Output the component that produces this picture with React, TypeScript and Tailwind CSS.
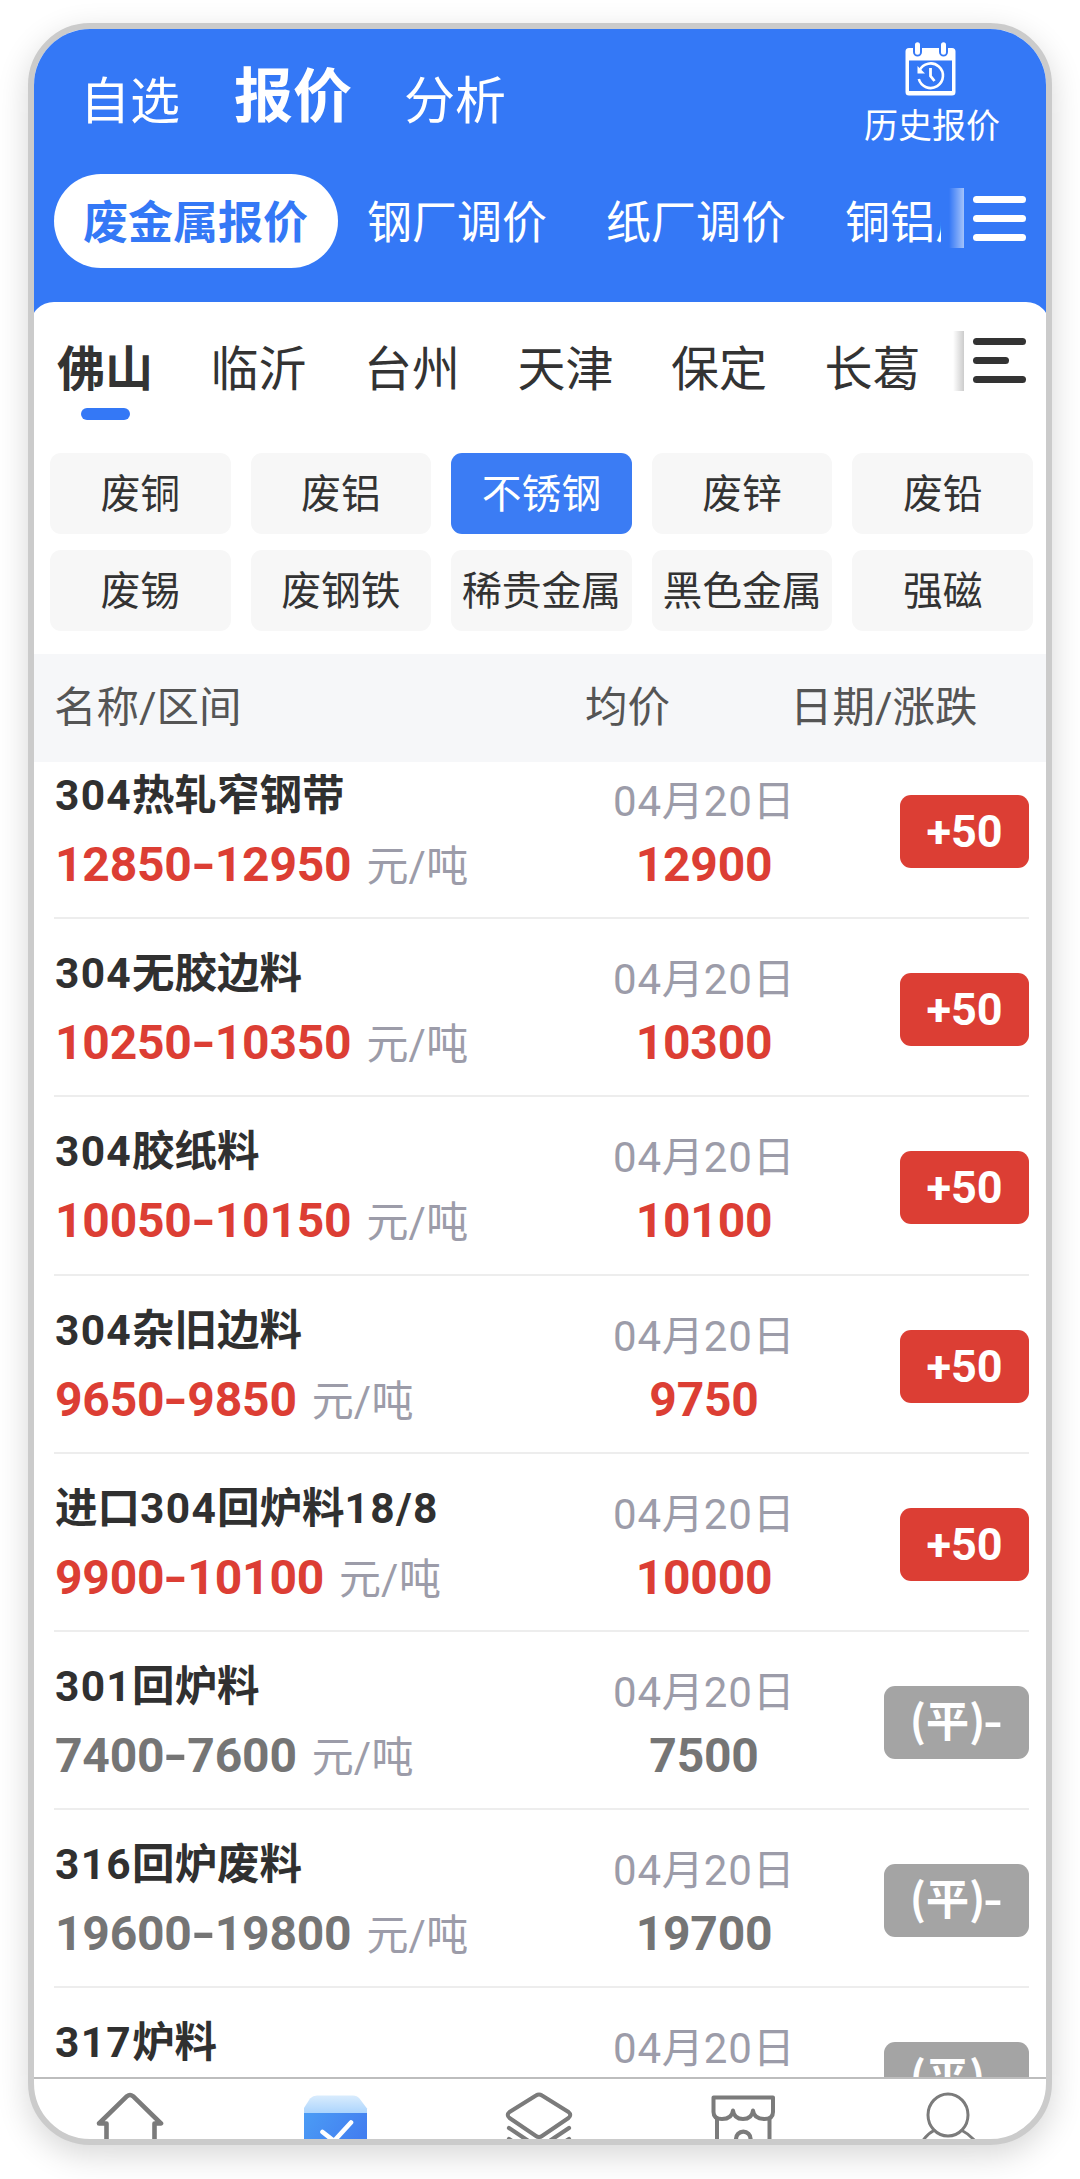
import clsx from "clsx"
import type { ReactNode } from "react"

const markets = ["钢厂调价", "纸厂调价", "铜铝厂调价"]
const cities = ["佛山", "临沂", "台州", "天津", "保定", "长葛"]
const metals = [
  "废铜",
  "废铝",
  "不锈钢",
  "废锌",
  "废铅",
  "废锡",
  "废钢铁",
  "稀贵金属",
  "黑色金属",
  "强磁",
]

type Quote = {
  name: string
  low: string
  high: string
  avg: string
  change: number
}

const quotes: Quote[] = [
  { name: "304热轧窄钢带", low: "12850", high: "12950", avg: "12900", change: 50 },
  { name: "304无胶边料", low: "10250", high: "10350", avg: "10300", change: 50 },
  { name: "304胶纸料", low: "10050", high: "10150", avg: "10100", change: 50 },
  { name: "304杂旧边料", low: "9650", high: "9850", avg: "9750", change: 50 },
  { name: "进口304回炉料18/8", low: "9900", high: "10100", avg: "10000", change: 50 },
  { name: "301回炉料", low: "7400", high: "7600", avg: "7500", change: 0 },
  { name: "316回炉废料", low: "19600", high: "19800", avg: "19700", change: 0 },
  { name: "317炉料", low: "20800", high: "21000", avg: "20900", change: 0 },
]

// Latin digits are set in Roboto, the rest stays in the CJK face
function Mixed({ text, className }: { text: string; className: string }) {
  return (
    <>
      {text.split(/([0-9/]+)/).map((part, i) =>
        /[0-9/]/.test(part) ? (
          <span key={i} className={clsx("font-[Roboto]", className)}>
            {part}
          </span>
        ) : (
          part
        ),
      )}
    </>
  )
}

function HistoryIcon() {
  return (
    <svg width="51" height="54" viewBox="0 0 51 54" fill="none">
      <path
        d="M4 6h43a3.5 3.5 0 0 1 3.5 3.5V50a3.5 3.5 0 0 1-3.5 3.5H4A3.5 3.5 0 0 1 .5 50V9.5A3.5 3.5 0 0 1 4 6Z"
        fill="#fff"
      />
      <path d="M4 18.5h43V49H4z" fill="#3478f6" />
      <path d="M12.5 3v7M38.5 3v7" stroke="#3478f6" strokeWidth="9" strokeLinecap="round" />
      <path d="M12.5 2.8v7.4M38.5 2.8v7.4" stroke="#fff" strokeWidth="5" strokeLinecap="round" />
      <path d="M14.5 28.5A12.3 12.3 0 1 1 13.8 37" stroke="#fff" strokeWidth="2.6" />
      <path d="M12.5 24v7.5h7.5z" fill="#fff" />
      <path d="M25.5 26v8l4 5" stroke="#fff" strokeWidth="2.8" />
    </svg>
  )
}

function MenuBars({ short, className }: { short?: boolean; className: string }) {
  return (
    <div className="flex w-[53px] flex-col gap-3">
      <div className={clsx("h-[7px] rounded-full", className)} />
      <div className={clsx("h-[7px] rounded-full", short ? "w-9" : "w-full", className)} />
      <div className={clsx("h-[7px] rounded-full", className)} />
    </div>
  )
}

function NavIcon({ children }: { children: ReactNode }) {
  return (
    <svg
      width="72"
      height="60"
      viewBox="-36 0 72 60"
      fill="none"
      stroke="#7b7b7b"
      strokeWidth="4.6"
      strokeLinecap="round"
      strokeLinejoin="round"
    >
      {children}
    </svg>
  )
}

function BottomNav() {
  return (
    <nav className="-ml-1.5 grid h-[60px] w-[1022px] shrink-0 grid-cols-5 justify-items-center overflow-hidden pt-[11px]">
      <NavIcon>
        <path d="M-23.5 60V33.5H-31L-3 6.2Q0 3.8 3 6.2L31 33.5H24.5V60" />
      </NavIcon>
      <NavIcon>
        <defs>
          <linearGradient id="lid" x1="0" y1="0" x2="0" y2="1">
            <stop offset="0" stopColor="#d9ecfd" />
            <stop offset="1" stopColor="#a9d3fd" />
          </linearGradient>
          <linearGradient id="box" x1="0" y1="0" x2="1" y2="0.4">
            <stop offset="0" stopColor="#4b9cf5" />
            <stop offset="1" stopColor="#437ff0" />
          </linearGradient>
        </defs>
        <path d="M-31 24v-6L-25 8.5Q-22 5.5-18 5.5H18Q22 5.5 24.5 8.5L32 18.5V24Z" fill="url(#lid)" stroke="none" />
        <path d="M-31 23h63v37h-63z" fill="url(#box)" stroke="none" />
        <path d="M-12.5 42L-1 51L16 32.5" stroke="#fff" />
      </NavIcon>
      <NavIcon>
        <path d="M-3 5.5Q0 3.5 3 5.5L29.5 22Q33 25 29.5 28L3 46Q0 48-3 46L-29.5 28Q-33 25-29.5 22Z" strokeWidth="4" />
        <path d="M-30 38L0 58L30 38M-30 49L-4 66M30 49L4 66" strokeWidth="4.2" />
      </NavIcon>
      <NavIcon>
        <path
          d="M-29.5 7.5H30V22Q30 29 21.5 29Q11 29 10 20.5Q9 29 0 29Q-9 29-10 20.5Q-11 29-21 29Q-29.5 29-29.5 22Z"
          strokeWidth="4"
        />
        <path d="M-26 29V60M26.5 29V60" strokeWidth="4" />
        <path d="M-7 60V49A7.3 7.3 0 0 1 7.6 49V60" strokeWidth="4.2" />
      </NavIcon>
      <NavIcon>
        <ellipse cx="0" cy="25" rx="20" ry="21" strokeWidth="3" />
        <path d="M-14 40.5Q-21 44-26 52M14 40.5Q21 44 28 52" strokeWidth="3" />
      </NavIcon>
    </nav>
  )
}

function QuoteRow({ quote }: { quote: Quote }) {
  const up = quote.change > 0
  const priceColor = up ? "text-[#dc3e34]" : "text-[#757575]"
  return (
    <div className="grid h-[178.2px] grid-cols-[560px_180px_1fr] border-b-2 border-[#ededed]">
      <div className="pt-[30px]">
        <div className="h-[43px] pl-px text-[42.5px] leading-none font-bold whitespace-nowrap text-[#303030]">
          <Mixed text={quote.name} className="tracking-[1.3px]" />
        </div>
        <div className="mt-[27px] flex items-baseline pl-px leading-none">
          <span className={clsx("flex font-[Roboto] text-[48px] font-bold tracking-[-0.2px]", priceColor)}>
            {quote.low}
            <span className="w-[23px] scale-x-135 text-center">-</span>
            {quote.high}
          </span>
          <span className="ml-[15px] text-[42px] text-[#9c9ca9]">
            元<span className="font-[Roboto] tracking-[0.5px]">/</span>吨
          </span>
        </div>
      </div>
      <div className="pt-9 text-center">
        <div className="-ml-px h-[42px] text-[42px] leading-none whitespace-nowrap text-[#9c9ca9]">
          <Mixed text="04月20日" className="tracking-[0.8px]" />
        </div>
        <div className={clsx("mt-[22px] font-[Roboto] text-[48px] leading-none font-bold tracking-[-0.2px]", priceColor)}>
          {quote.avg}
        </div>
      </div>
      <div
        className={clsx(
          "mt-[54px] flex h-[73px] items-center justify-center justify-self-end rounded-[11px] font-bold text-white",
          up ? "w-[129px] bg-[#dc3e34] font-[Roboto] text-[45px]" : "w-[145px] bg-[#a4a4a4] text-[43px]",
        )}
      >
        {up ? (
          <span className="leading-none">+{quote.change}</span>
        ) : (
          <span className="-mt-2 -ml-0.5 flex leading-none">
            (平)<span className="scale-x-125">-</span>
          </span>
        )}
      </div>
    </div>
  )
}

export default function App() {
  return (
    <div className="h-[2179px] w-[1080px] overflow-hidden bg-white px-7 pt-[23px] font-['Noto_Sans_CJK_SC',sans-serif]">
      <div className="flex h-[2122px] flex-col overflow-hidden rounded-[62px] border-[6px] border-[#cbcbcb] bg-white shadow-[0_10px_32px_rgba(0,0,0,0.16)]">
        <div className="h-[273px] shrink-0 bg-[#3478f6] text-white">
          <div className="flex h-[145px] justify-between pr-[46px] pl-[46px] leading-none whitespace-nowrap">
            <div className="flex">
              <span className="mt-[43px] text-[50px]">自选</span>
              <span className="mt-[33px] ml-[54px] text-[59px] font-bold">报价</span>
              <span className="mt-[43px] ml-[52px] text-[51px]">分析</span>
            </div>
            <div className="flex flex-col items-center pt-[13px]">
              <div className="-ml-[3px]">
                <HistoryIcon />
              </div>
              <span className="mt-[11px] text-[34px]">历史报价</span>
            </div>
          </div>
          <div className="flex h-[94px] items-center pl-5 text-[45px] leading-none whitespace-nowrap">
            <div className="flex h-[94px] w-[284px] shrink-0 items-center justify-center rounded-full bg-white font-bold text-[#3478f6]">
              <span className="-mt-1 -ml-px">废金属报价</span>
            </div>
            <div className="-mt-1 ml-[29px] flex w-[574px] gap-[59px] overflow-hidden py-3">
              {markets.map((m) => (
                <span key={m} className="shrink-0">
                  {m}
                </span>
              ))}
            </div>
            <div className="-mt-1.5 mr-[9px] ml-2 h-[60px] w-[15px] bg-linear-to-r from-white/0 to-white/55" />
            <div className="-mt-1.5">
              <MenuBars className="bg-white" />
            </div>
          </div>
        </div>

        <div className="shrink-0 bg-[#3478f6]">
          <div className="-mx-1 h-[151px] rounded-t-[24px] bg-white pr-6 pl-[27px]">
            <div className="flex items-start justify-between">
              <div className="flex gap-[57.5px] pt-[39px] text-[48px] leading-none whitespace-nowrap text-[#333]">
                {cities.map((city, i) => (
                  <div key={city} className={clsx("flex flex-col items-center", i === 0 && "font-bold")}>
                    {city}
                    {i === 0 && <div className="mt-[19px] h-3 w-[49px] rounded-full bg-[#3478f6]" />}
                  </div>
                ))}
              </div>
              <div className="flex pt-[29px]">
                <div className="mr-[9px] h-[60px] w-[11px] bg-linear-to-r from-black/0 to-black/20" />
                <div className="pt-[7px]">
                  <MenuBars short className="bg-[#333]" />
                </div>
              </div>
            </div>
          </div>
        </div>

        <div className="grid h-[201px] shrink-0 auto-rows-[81px] grid-cols-5 gap-x-5 gap-y-4 pr-[13px] pl-4 text-[39.8px] leading-none whitespace-nowrap text-[#333]">
          {metals.map((metal) => (
            <div
              key={metal}
              className={clsx(
                "flex items-center justify-center rounded-[11px]",
                metal === "不锈钢" ? "bg-[#3b7cf4] text-white" : "bg-[#f7f7f7]",
              )}
            >
              <span className="-mt-1.5">{metal}</span>
            </div>
          ))}
        </div>

        <div className="grid h-[108px] shrink-0 grid-cols-[531px_205px_1fr] items-baseline bg-[#f6f7f9] pt-[29px] pl-5 text-[42.5px] leading-none text-[#555]">
          <span>
            名称<span className="font-[Roboto]">/</span>区间
          </span>
          <span>均价</span>
          <span>
            日期<span className="font-[Roboto]">/</span>涨跌
          </span>
        </div>

        <div className="min-h-0 flex-1 overflow-hidden pr-[17px] pl-5">
          <div className="-mt-[21px]">
            {quotes.map((quote) => (
              <QuoteRow key={quote.name} quote={quote} />
            ))}
          </div>
        </div>

        <div className="h-0.5 shrink-0 bg-[#bdbdbd]" />
        <BottomNav />
      </div>
    </div>
  )
}
